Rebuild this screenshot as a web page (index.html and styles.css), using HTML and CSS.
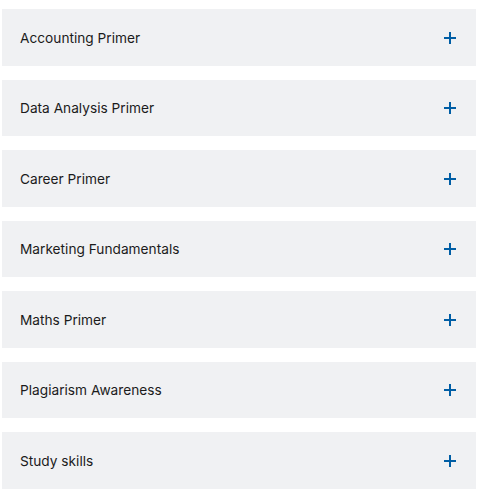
FILE: index.html
```html
<!DOCTYPE html>
<html>
<head>
<meta charset="utf-8">
<link rel="stylesheet" href="styles.css">
</head>
<body>
<div class="accordion">
  <div class="item"><span class="label">Accounting Primer</span><span class="plus"></span></div>
  <div class="item"><span class="label">Data Analysis Primer</span><span class="plus"></span></div>
  <div class="item"><span class="label">Career Primer</span><span class="plus"></span></div>
  <div class="item"><span class="label">Marketing Fundamentals</span><span class="plus"></span></div>
  <div class="item"><span class="label">Maths Primer</span><span class="plus"></span></div>
  <div class="item"><span class="label">Plagiarism Awareness</span><span class="plus"></span></div>
  <div class="item"><span class="label">Study skills</span><span class="plus"></span></div>
</div>
</body>
</html>
```
FILE: styles.css
```css
html, body { margin: 0; padding: 0; background: #fff; }
.accordion {
  display: flex;
  flex-direction: column;
  gap: 14px;
  padding: 9px 10px 0 2px;
  width: 474px;
}
.item {
  display: flex;
  align-items: center;
  justify-content: space-between;
  height: 56.5px;
  background: #f0f1f3;
  padding: 1px 20px 0 18px;
  box-sizing: border-box;
}
.label {
  font-family: Inter, "Liberation Sans", sans-serif;
  font-size: 13.7px;
  color: #1b1b1b;
}
.plus {
  position: relative;
  width: 12px;
  height: 12px;
}
.plus::before, .plus::after {
  content: "";
  position: absolute;
  background: #005ea5;
}
.plus::before { left: 0; right: 0; top: 5px; height: 2px; }
.plus::after { top: 0; bottom: 0; left: 5px; width: 2px; }
```
